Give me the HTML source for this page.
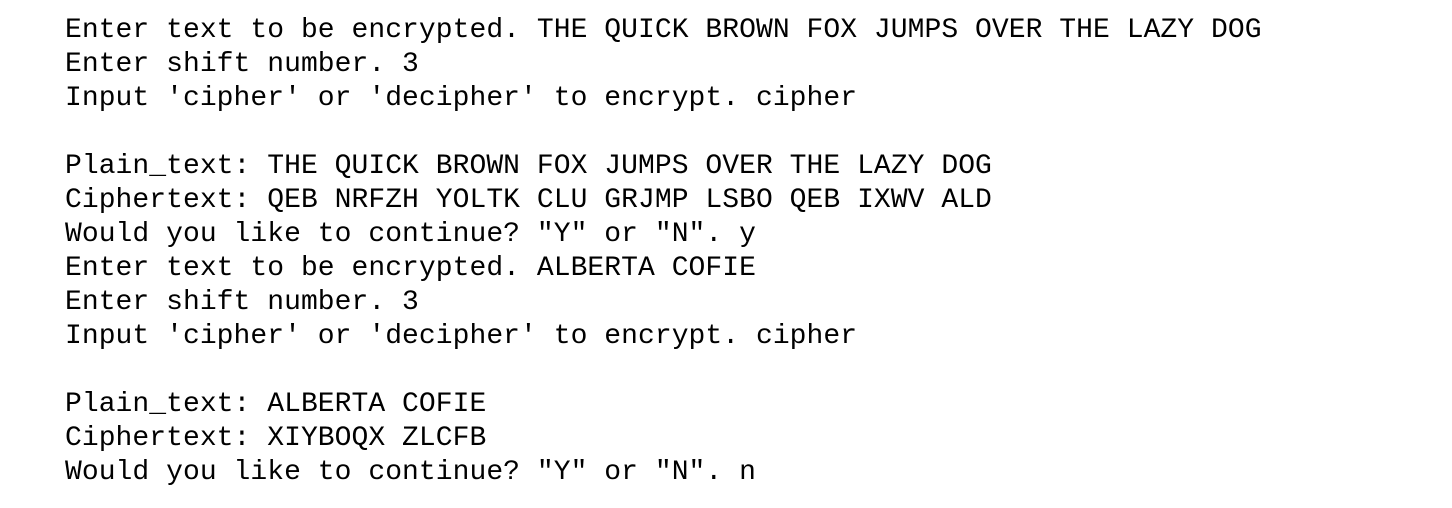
<!DOCTYPE html>
<html><head><meta charset="utf-8"><style>
html,body{margin:0;padding:0;background:#fff;width:1452px;height:508px;overflow:hidden}
pre{margin:0;position:absolute;left:65px;top:14px;font-family:"Liberation Mono",monospace;font-size:28px;line-height:34px;color:#000;letter-spacing:0.05px}
</style></head><body>
<pre>Enter text to be encrypted. THE QUICK BROWN FOX JUMPS OVER THE LAZY DOG
Enter shift number. 3
Input 'cipher' or 'decipher' to encrypt. cipher

Plain_text: THE QUICK BROWN FOX JUMPS OVER THE LAZY DOG
Ciphertext: QEB NRFZH YOLTK CLU GRJMP LSBO QEB IXWV ALD
Would you like to continue? "Y" or "N". y
Enter text to be encrypted. ALBERTA COFIE
Enter shift number. 3
Input 'cipher' or 'decipher' to encrypt. cipher

Plain_text: ALBERTA COFIE
Ciphertext: XIYBOQX ZLCFB
Would you like to continue? "Y" or "N". n</pre>
</body></html>
